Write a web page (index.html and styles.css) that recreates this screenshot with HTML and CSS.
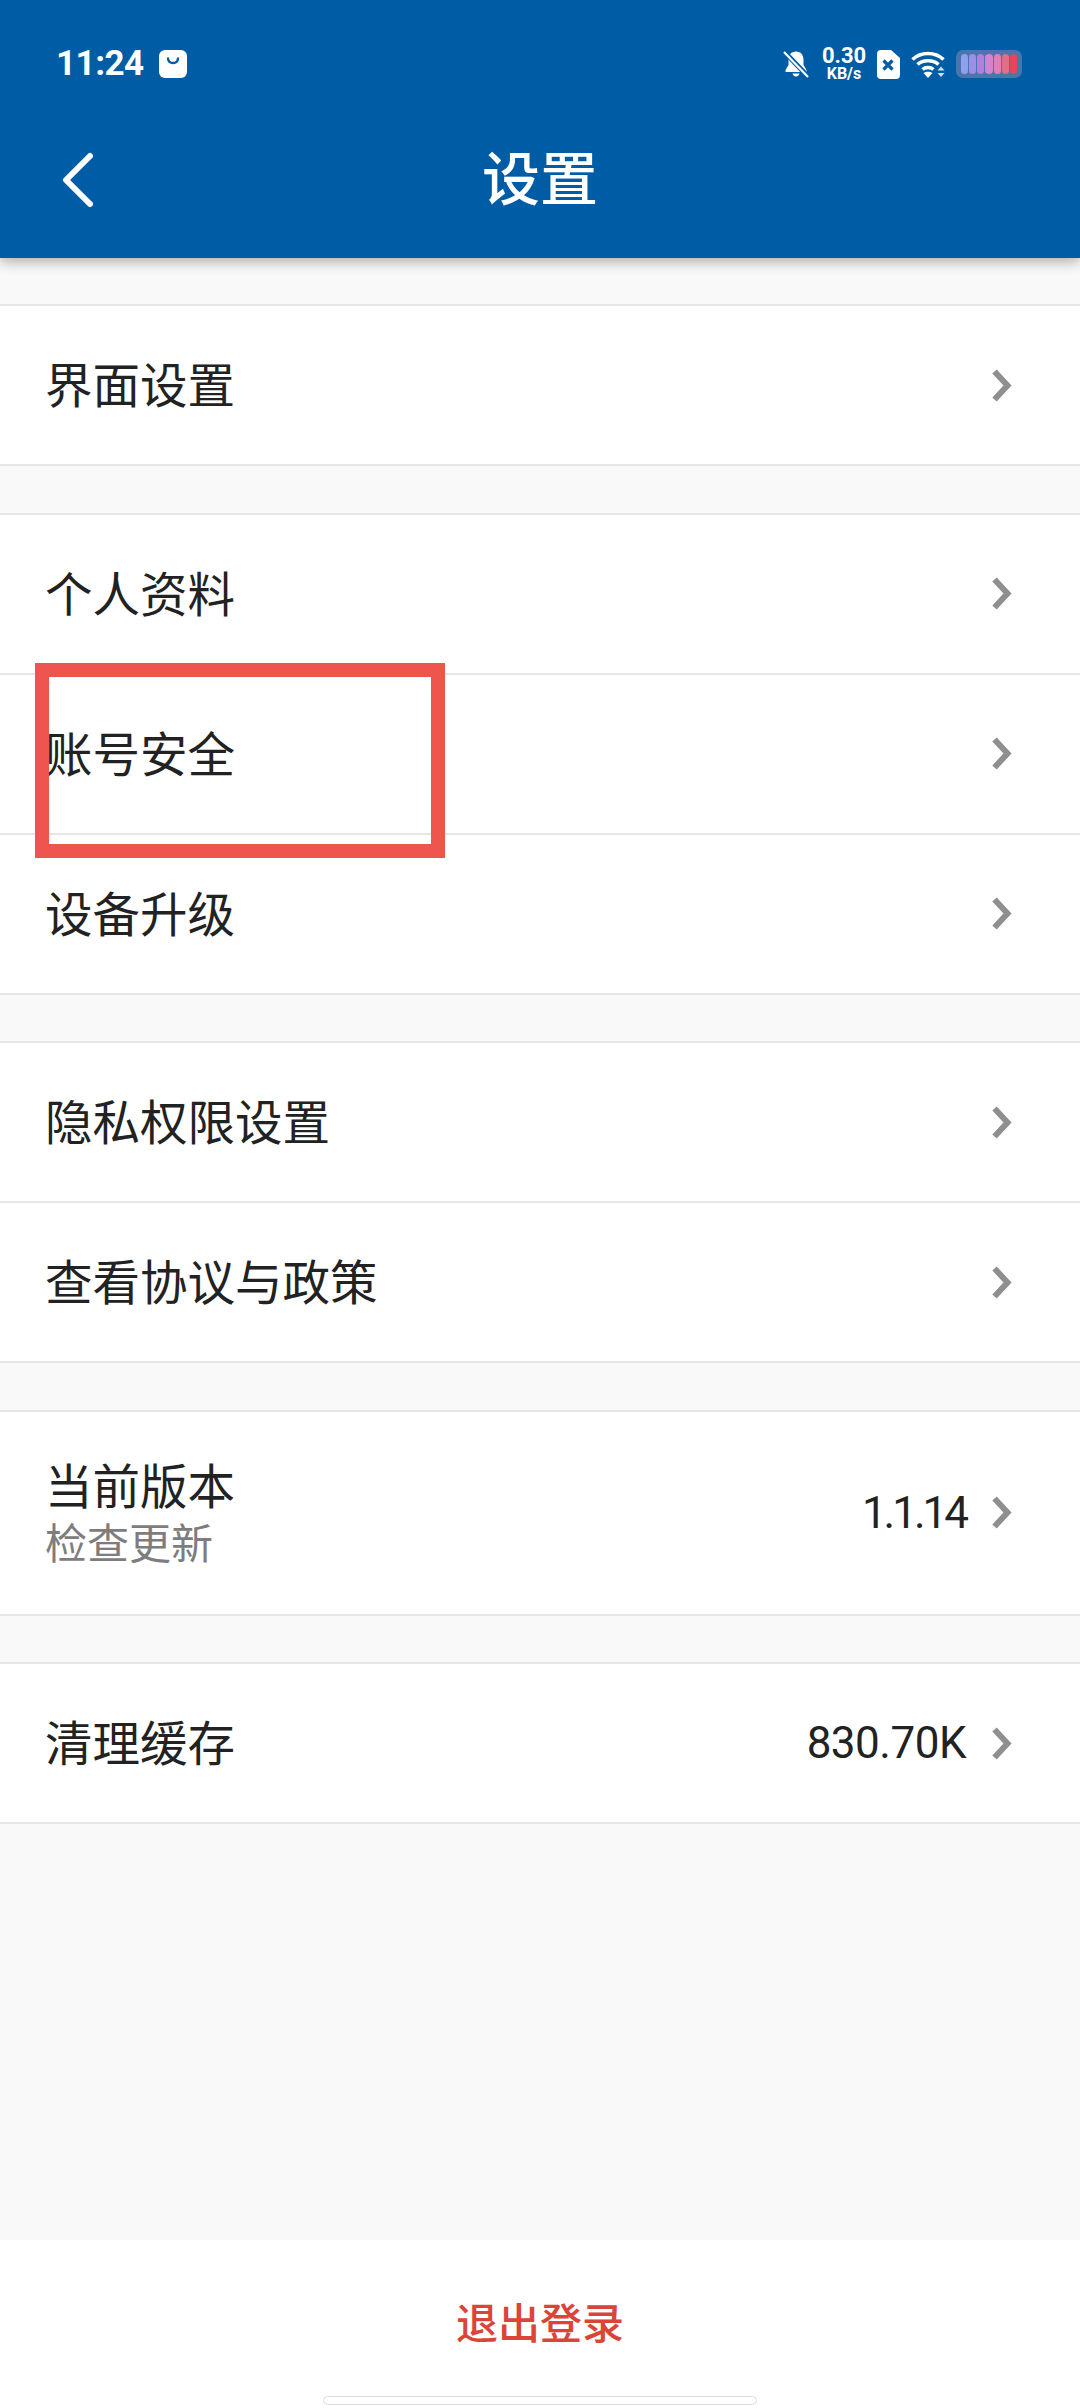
FILE: index.html
```html
<!DOCTYPE html>
<html lang="zh-CN">
<head>
    <meta charset="UTF-8">
    <meta name="viewport" content="width=device-width, initial-scale=1.0">
    <title>设置</title>
    <link rel="stylesheet" href="styles.css">
</head>
<body>
    <div class="screen">
        <header class="header">
            <div class="status-bar">
                <div class="status-left">
                    <span class="time">11:24</span>
                    <svg class="icon-bag" viewBox="0 0 28 28"><rect width="28" height="28" rx="6" fill="#fff"/><path d="M9 8.500c.6 6 9.400 6 10 0" fill="none" stroke="#005ca5" stroke-width="2.400" stroke-linecap="round"/></svg>
                </div>
                <div class="status-right">
                    <svg class="icon-bell" viewBox="0 0 26 28"><path d="M13 1.500c-4.800 0-7.500 3.600-7.500 8v5.500L2.500 20v2h21v-2l-3-5V9.500c0-4.400-2.700-8-7.500-8z" fill="#fff"/><path d="M9.500 23.500c.5 2 1.800 3 3.500 3s3-1 3.500-3z" fill="#fff"/><path d="M1 1.500l24 25" stroke="#005ca5" stroke-width="5"/><path d="M1 2l24 25" stroke="#fff" stroke-width="2.200"/></svg>
                    <div class="speed">
                        <span class="speed-num">0.30</span>
                        <span class="speed-unit">KB/s</span>
                    </div>
                    <svg class="icon-sim" viewBox="0 0 23 29"><path d="M4 0h10l9 8v17a4 4 0 0 1-4 4H4a4 4 0 0 1-4-4V4a4 4 0 0 1 4-4z" fill="#fff"/><path d="M6.500 10.500l9 9M15.500 10.500l-9 9" stroke="#005ca5" stroke-width="3.200"/></svg>
                    <svg class="icon-wifi" viewBox="0 0 35 28"><path d="M1.500 9.500C10 1.500 24 1.500 32.500 9.500M6.500 14.500c5.600-5 15.400-5 21 0M11.500 19.500c3-2.600 8-2.600 11 0" fill="none" stroke="#fff" stroke-width="3.600"/><path d="M12.500 23c2.500-1.800 6.500-1.800 9 0L17 28z" fill="#fff"/><path d="M30 16.500l3.500 4h-7zM30 27l3.500-4h-7z" fill="#cfe0f0"/></svg>
                    <div class="battery">
                        <i></i><i></i><i></i><i></i><i></i><i></i><i></i>
                    </div>
                </div>
            </div>
            <div class="title-bar">
                <svg class="icon-back" viewBox="0 0 34 56"><path d="M29 4L5 28l24 24" fill="none" stroke="#fff" stroke-width="6" stroke-linecap="round" stroke-linejoin="round"/></svg>
                <h1 class="title">设置</h1>
            </div>
        </header>

        <main class="content">
            <section class="group">
                <div class="row"><span class="row-label">界面设置</span><svg class="chevron" viewBox="0 0 20 33"><path d="M2.500 2.500l13 14-13 14" fill="none" stroke="#8f8f8f" stroke-width="6"/></svg></div>
            </section>
            <section class="group">
                <div class="row"><span class="row-label">个人资料</span><svg class="chevron" viewBox="0 0 20 33"><path d="M2.500 2.500l13 14-13 14" fill="none" stroke="#8f8f8f" stroke-width="6"/></svg></div>
                <div class="row"><span class="row-label">账号安全</span><svg class="chevron" viewBox="0 0 20 33"><path d="M2.500 2.500l13 14-13 14" fill="none" stroke="#8f8f8f" stroke-width="6"/></svg></div>
                <div class="row"><span class="row-label">设备升级</span><svg class="chevron" viewBox="0 0 20 33"><path d="M2.500 2.500l13 14-13 14" fill="none" stroke="#8f8f8f" stroke-width="6"/></svg></div>
            </section>
            <section class="group">
                <div class="row"><span class="row-label">隐私权限设置</span><svg class="chevron" viewBox="0 0 20 33"><path d="M2.500 2.500l13 14-13 14" fill="none" stroke="#8f8f8f" stroke-width="6"/></svg></div>
                <div class="row"><span class="row-label">查看协议与政策</span><svg class="chevron" viewBox="0 0 20 33"><path d="M2.500 2.500l13 14-13 14" fill="none" stroke="#8f8f8f" stroke-width="6"/></svg></div>
            </section>
            <section class="group">
                <div class="row row-tall">
                    <div class="row-text">
                        <span class="row-label">当前版本</span>
                        <span class="row-sub">检查更新</span>
                    </div>
                    <span class="row-value row-value-tight">1.1.14</span>
                    <svg class="chevron" viewBox="0 0 20 33"><path d="M2.500 2.500l13 14-13 14" fill="none" stroke="#8f8f8f" stroke-width="6"/></svg>
                </div>
            </section>
            <section class="group">
                <div class="row">
                    <span class="row-label">清理缓存</span>
                    <span class="row-value">830.70K</span>
                    <svg class="chevron" viewBox="0 0 20 33"><path d="M2.500 2.500l13 14-13 14" fill="none" stroke="#8f8f8f" stroke-width="6"/></svg>
                </div>
            </section>
        </main>

        <footer class="footer">
            <span class="logout">退出登录</span>
            <div class="home-bar"></div>
        </footer>

        <div class="highlight"></div>
    </div>
</body>
</html>
```

FILE: styles.css
```css
* {
    box-sizing: border-box;
}
body {
    margin: 0;
    font-family: "Noto Sans CJK SC", "Noto Sans", sans-serif;
    background-color: #f9f9f9;
}
.screen {
    position: relative;
    display: flex;
    flex-direction: column;
    width: 1080px;
    height: 2408px;
    overflow: hidden;
}

/* header */
.header {
    height: 258px;
    padding-top: 1px;
    background-color: #005ca5;
    box-shadow: 0 4px 12px rgba(0, 0, 0, 0.3);
    color: white;
    z-index: 1;
}
.status-bar {
    display: flex;
    justify-content: space-between;
    align-items: center;
    height: 50px;
    margin-top: 38px;
    padding: 0 58px 0 56px;
}
.status-left {
    display: flex;
    align-items: center;
    gap: 15px;
}
.time {
    font-family: Roboto, sans-serif;
    font-size: 35px;
    font-weight: 700;
    letter-spacing: -0.5px;
    line-height: 50px;
}
.icon-bag {
    width: 28px;
    height: 28px;
}
.status-right {
    display: flex;
    align-items: center;
}
.icon-bell {
    width: 26px;
    height: 28px;
    margin-right: 11px;
}
.speed {
    display: flex;
    flex-direction: column;
    align-items: center;
    width: 48px;
    margin-right: 9px;
    font-family: Roboto, sans-serif;
    font-weight: 700;
}
.speed-num {
    font-size: 22px;
    line-height: 20px;
}
.speed-unit {
    font-size: 16px;
    line-height: 16px;
}
.icon-sim {
    width: 23px;
    height: 29px;
    margin-right: 11px;
}
.icon-wifi {
    width: 35px;
    height: 28px;
    margin-right: 10px;
}
.battery {
    display: flex;
    gap: 1px;
    width: 66px;
    height: 28px;
    padding: 4px 5px;
    border-radius: 7px;
    background-color: #4a76ac;
}
.battery i {
    flex: 1;
    border-radius: 4px;
}
.battery i:nth-child(1) { background-color: #929ff0; }
.battery i:nth-child(2) { background-color: #9b8fe8; }
.battery i:nth-child(3) { background-color: #b27fe0; }
.battery i:nth-child(4) { background-color: #d284d4; }
.battery i:nth-child(5) { background-color: #e07fb4; }
.battery i:nth-child(6) { background-color: #de6f88; }
.battery i:nth-child(7) { background-color: #e2475c; }

.title-bar {
    position: relative;
    display: flex;
    justify-content: center;
    align-items: center;
    height: 100px;
    margin-top: 36px;
}
.title {
    margin: 0;
    font-size: 58px;
    font-weight: 500;
}
.icon-back {
    position: absolute;
    left: 61px;
    top: 27px;
    width: 34px;
    height: 56px;
}

/* list */
.content {
    flex: 1;
    padding-top: 46px;
}
.group {
    margin-bottom: 46.5px;
    background: white;
    border-top: 2px solid #e6e6e6;
}
.row {
    display: flex;
    align-items: center;
    height: 160px;
    padding: 0 68px 0 45px;
    border-bottom: 2px solid #e6e6e6;
}
.row-tall {
    height: 204px;
}
.row-text {
    display: flex;
    flex-direction: column;
    margin-right: auto;
    margin-bottom: 4px;
}
.row-label {
    margin-right: auto;
    margin-bottom: 5px;
    font-size: 47.5px;
    line-height: 55px;
    color: #222;
}
.row-sub {
    font-size: 42px;
    line-height: 50px;
    color: #7d7d7d;
}
.row-value {
    margin-right: 26px;
    font-family: Roboto, sans-serif;
    font-size: 44px;
    letter-spacing: -0.5px;
    color: #222;
}
.row-value-tight {
    letter-spacing: -3px;
}
.chevron {
    width: 20px;
    height: 33px;
    margin-left: auto;
}
.row-value + .chevron {
    margin-left: 0;
}

/* bottom */
.footer {
    position: relative;
    display: flex;
    justify-content: center;
    align-items: center;
    height: 168px;
    padding-bottom: 7px;
    background: white;
}
.logout {
    font-size: 42px;
    font-weight: 500;
    color: #db4438;
}
.home-bar {
    position: absolute;
    left: 323px;
    bottom: 3px;
    width: 434px;
    height: 9px;
    border: 1px solid #dcdcdc;
    border-radius: 5px;
    background: white;
}

/* red annotation box */
.highlight {
    position: absolute;
    left: 35px;
    top: 663px;
    width: 410px;
    height: 195px;
    border: 14px solid #ef554f;
    z-index: 2;
}
```
